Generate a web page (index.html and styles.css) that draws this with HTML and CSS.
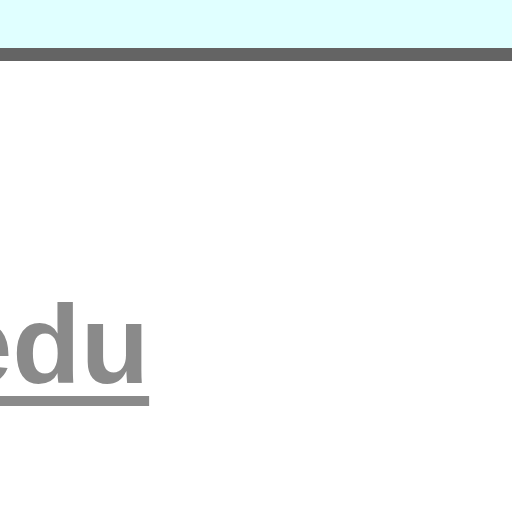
FILE: index.html
```html
<!DOCTYPE html>
<html>
<head>
<meta charset="utf-8">
<link rel="stylesheet" href="styles.css">
</head>
<body>
<header class="topbar"></header>
<main class="content">
  <a class="domain" href="#">edu</a>
</main>
</body>
</html>
```
FILE: styles.css
```css
html, body {
  margin: 0;
  padding: 0;
  background: #ffffff;
  overflow: hidden;
}
.topbar {
  display: block;
  height: 48px;
  background: #e0ffff;
  border-bottom: 13px solid #646464;
}
.content {
  padding-top: 220px;
}
.domain {
  display: inline-block;
  margin-left: -50px;
  font-family: "Liberation Sans", Arial, sans-serif;
  font-weight: bold;
  font-size: 112px;
  line-height: 128px;
  color: #8a8a8a;
  text-decoration: underline;
  text-decoration-thickness: 10px;
  text-underline-offset: 13px;
}
```
